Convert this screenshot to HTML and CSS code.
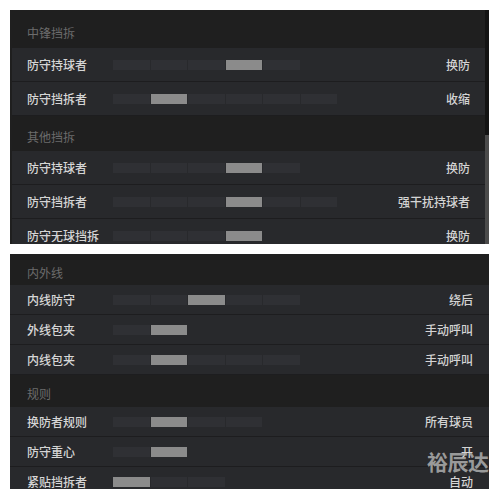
FILE: index.html
```html
<!DOCTYPE html>
<html lang="zh">
<head>
<meta charset="utf-8">
<link rel="stylesheet" href="styles.css">
</head>
<body>
<div class="page">
  <div class="panel panel-top">
    <div class="list">
      <div class="header h1">中锋挡拆</div>
      <div class="row">
        <div class="label">防守持球者</div>
        <div class="segs"><i></i><i></i><i></i><i class="on"></i><i></i></div>
        <div class="value">换防</div>
      </div>
      <div class="row">
        <div class="label">防守挡拆者</div>
        <div class="segs"><i></i><i class="on"></i><i></i><i></i><i></i><i></i></div>
        <div class="value">收缩</div>
      </div>
      <div class="header h2">其他挡拆</div>
      <div class="row">
        <div class="label">防守持球者</div>
        <div class="segs"><i></i><i></i><i></i><i class="on"></i><i></i></div>
        <div class="value">换防</div>
      </div>
      <div class="row">
        <div class="label">防守挡拆者</div>
        <div class="segs"><i></i><i></i><i></i><i class="on"></i><i></i><i></i></div>
        <div class="value">强干扰持球者</div>
      </div>
      <div class="row">
        <div class="label">防守无球挡拆</div>
        <div class="segs"><i></i><i></i><i></i><i class="on"></i></div>
        <div class="value">换防</div>
      </div>
    </div>
    <div class="scrollbar"><div class="track"></div><div class="thumb"></div></div>
  </div>

  <div class="panel panel-bottom">
    <div class="list">
      <div class="header h3">内外线</div>
      <div class="row">
        <div class="label">内线防守</div>
        <div class="segs"><i></i><i></i><i class="on"></i><i></i><i></i></div>
        <div class="value">绕后</div>
      </div>
      <div class="row">
        <div class="label">外线包夹</div>
        <div class="segs"><i></i><i class="on"></i></div>
        <div class="value">手动呼叫</div>
      </div>
      <div class="row">
        <div class="label">内线包夹</div>
        <div class="segs"><i></i><i class="on"></i><i></i><i></i><i></i></div>
        <div class="value">手动呼叫</div>
      </div>
      <div class="header h4">规则</div>
      <div class="row">
        <div class="label">换防者规则</div>
        <div class="segs"><i></i><i class="on"></i><i></i><i></i></div>
        <div class="value">所有球员</div>
      </div>
      <div class="row">
        <div class="label">防守重心</div>
        <div class="segs"><i></i><i class="on"></i></div>
        <div class="value">开</div>
      </div>
      <div class="row">
        <div class="label">紧贴挡拆者</div>
        <div class="segs"><i class="on"></i><i></i><i></i></div>
        <div class="value">自动</div>
      </div>
    </div>
  </div>
  <div class="watermark">裕辰达</div>
</div>
</body>
</html>
```
FILE: styles.css
```css
html, body {
  margin: 0;
  padding: 0;
  background: #ffffff;
}
body {
  font-family: "Noto Sans CJK SC", "Noto Sans", sans-serif;
  font-size: 12px;
}
.page {
  position: relative;
  width: 500px;
  height: 500px;
  padding: 10px 0 0 10px;
  box-sizing: border-box;
  display: flex;
  flex-direction: column;
  gap: 10px;
}
.panel {
  width: 479px;
  background: #1f1f1f;
  overflow: hidden;
  display: flex;
}
.panel-top { height: 234px; }
.panel-bottom { height: 235px; }
.list {
  flex: 1;
  display: flex;
  flex-direction: column;
  min-width: 0;
}
.header {
  display: flex;
  align-items: flex-end;
  padding-left: 17px;
  color: #6c6c6c;
  line-height: 12px;
  box-sizing: border-box;
  flex: none;
}
.h1 { height: 38px; padding-bottom: 9px; }
.h2 { height: 35px; padding-bottom: 8px; }
.h3 { height: 31px; padding-bottom: 6px; }
.h4 { height: 32px; padding-bottom: 7px; }
.row {
  flex: none;
  display: flex;
  align-items: center;
  background: #28292c;
  border-bottom: 1px solid #1d1d1f;
  color: #d6d6d6;
  line-height: 12px;
  font-weight: 500;
}
.panel-top .row {
  height: 33px;
  margin-left: 2px;
  padding: 0 15px;
}
.panel-bottom .row {
  height: 29px;
  padding: 0 16px 0 17px;
}
.label {
  width: 86px;
  flex: none;
  white-space: nowrap;
}
.segs {
  display: flex;
  gap: 1px;
}
.segs i {
  display: block;
  width: 36.5px;
  height: 10px;
  background: #2f3034;
}
.segs i.on {
  background: #8b8b8b;
}
.value {
  margin-left: auto;
  white-space: nowrap;
  color: #d4d4d4;
}
.scrollbar {
  width: 4px;
  flex: none;
  display: flex;
  flex-direction: column;
}
.track {
  height: 125px;
  background: #131313;
}
.thumb {
  flex: 1;
  background: #4b4b4b;
}
.watermark {
  position: absolute;
  left: 427px;
  top: 449px;
  font-size: 21px;
  line-height: 24px;
  font-weight: bold;
  color: rgba(175, 175, 175, 0.85);
  letter-spacing: -0.5px;
}
```
